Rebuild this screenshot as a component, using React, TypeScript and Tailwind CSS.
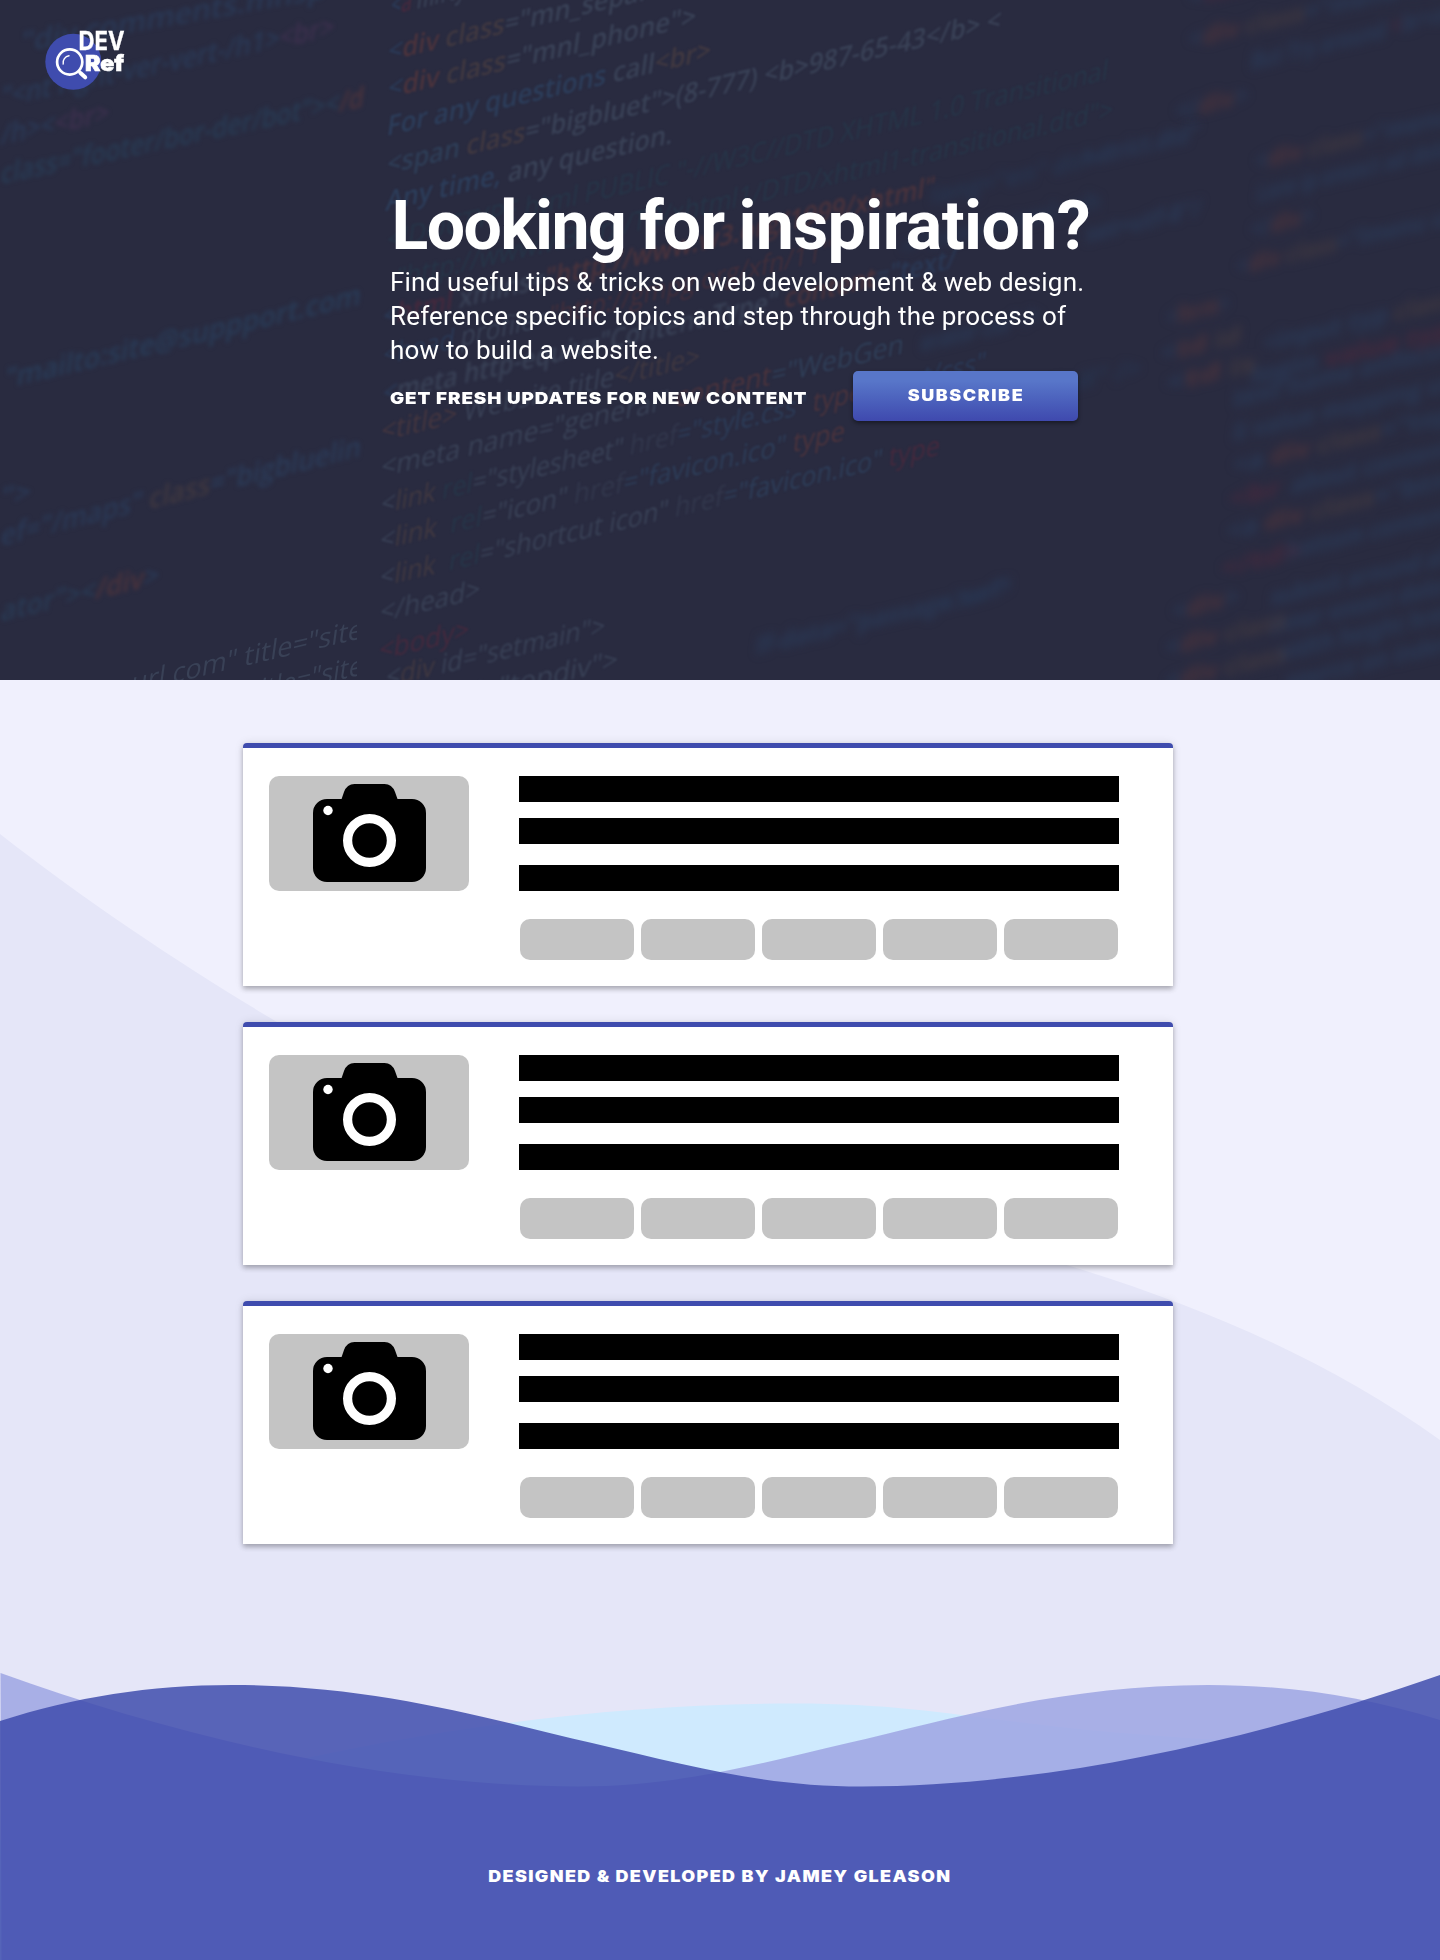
type Seg = [string, string?];
type Line = { x: number; y: number; w: number; a?: number; segs: Seg[] };

const GRAY = "#394156";
const BLUE = "#2a3956";
const BROWN = "#403840";
const ORANGE = "#4b333c";
const RED = "#45293d";
const TEAL = "#263548";
const PLUM = "#3d304e";

const soft: Line[] = [
  { x: 390, y: 15, w: 75, segs: [["<", BLUE], ["a", RED], [" mfrty", GRAY]] },
  { x: 387, y: 61, w: 262, segs: [["<", BLUE], ["div", ORANGE], [" class", BROWN], ['="mn_separ', GRAY]] },
  { x: 387, y: 98, w: 308, segs: [["<", BLUE], ["div", ORANGE], [" class", BROWN], ['="mnl_phone">', GRAY]] },
  { x: 386, y: 136, w: 324, segs: [["For any questions ", "#2c3d5a"], ["call", GRAY], ["<br>", BROWN]] },
  { x: 386, y: 174, w: 614, segs: [["<span", "#2e3d56"], [" class", BROWN], ['="bigbluet">(8-777) <b>987-65-43</b> <', GRAY]] },
  { x: 385, y: 211, w: 287, segs: [["Any time,", "#2c3d5a"], [" any question.", GRAY]] },
];

const crisp: Line[] = [
  { x: 386, y: 250, w: 721, segs: [['<!DOCTYPE html PUBLIC "-//W3C//DTD XHTML 1.0 Transitional', TEAL]] },
  { x: 395, y: 288, w: 717, segs: [['"http://www.w3.org/TR/xhtml1/DTD/xhtml1-transitional.dtd">', TEAL]] },
  { x: 382, y: 365, w: 448, segs: [["<head ", BLUE], ['profile=', GRAY], ['"http://gmpg.org/xfn/11"', "#432f3b"]] },
  { x: 380, y: 441, w: 319, segs: [["<title>", "#45363f"], [" Website title", GRAY], ["</title>", BROWN]] },
  { x: 379, y: 550, w: 465, segs: [["<", GRAY], ["link  ", BROWN], ["rel", TEAL], ['="icon" ', GRAY], ["href", "#32374c"], ['="favicon.ico" ', "#2d3d58"], ["type", ORANGE]] },
  { x: 379, y: 587, w: 560, segs: [["<", GRAY], ["link  ", BROWN], ["rel", TEAL], ['="shortcut icon" ', GRAY], ["href", "#32374c"], ['="favicon.ico" ', "#2d3d58"], ["type", RED]] },
  { x: 380, y: 477, w: 523, segs: [['<meta name="general" ', GRAY], ["content", ORANGE], ['="WebGen', "#2f3e57"]] },
  { x: 380, y: 514, w: 605, segs: [["<", GRAY], ["link ", BROWN], ["rel", TEAL], ['="stylesheet" ', GRAY], ["href", "#32374c"], ['="style.css" ', "#2c3c58"], ["type", ORANGE], ['="text/css"', BLUE]] },
  { x: 379, y: 622, w: 100, segs: [["</head>", GRAY]] },
  { x: 378, y: 660, w: 90, segs: [["<body>", RED]] },
  { x: 385, y: 687, w: 219, segs: [["<", GRAY], ["div", BROWN], [' id="setmain">', GRAY]] },
  { x: 396, y: 721, w: 221, segs: [["<", GRAY], ["div", BROWN], [' id="topdiv">', GRAY]] },
];

const hazy: Line[] = [
  { x: 382, y: 326, w: 552, segs: [["<", BLUE], ["html ", RED], ['xmlns=', GRAY], ['"http://www.w3.org/1999/xhtml"', ORANGE]] },
  { x: 382, y: 403, w: 573, segs: [["<", BLUE], ['meta http-equiv="Content-Type" ', GRAY], ["content", ORANGE], ['="text/', BLUE]] },
];

const left: Line[] = [
  { x: 20, y: 52, w: 305, a: -10, segs: [['"div comments.mnsp', BLUE]] },
  { x: 0, y: 107, w: 333, a: -12, segs: [['"<nt right-ver-vert-/h1>', BLUE], ["<br>", PLUM]] },
  { x: 0, y: 145, w: 108, a: -12, segs: [["/h><", BLUE], ["<br>", PLUM]] },
  { x: 0, y: 184, w: 363, a: -12, segs: [['class="footer/bor-der/bot"><', "#283b54"], ["/d", ORANGE]] },
  { x: 4, y: 389, w: 356, segs: [['"mailto:site@suppport.com', "#293c58"]] },
  { x: 0, y: 508, w: 30, segs: [['">', BLUE]] },
  { x: 0, y: 546, w: 360, a: -14, segs: [['ef="/maps" ', BLUE], ["class", BROWN], ['="bigbluelin', "#2b3b58"]] },
  { x: 0, y: 622, w: 158, segs: [['ator"><', "#293a54"], ["/div", ORANGE], [">", BLUE]] },
];

const leftCrisp: Line[] = [
  { x: 130, y: 693, w: 232, segs: [['url.com" title="site', GRAY]] },
  { x: 250, y: 701, w: 112, segs: [['title="site', GRAY]] },
];

const mid: Line[] = [
  { x: 1080, y: 168, w: 118, segs: [['1-strict.dtd"', BLUE]] },
  { x: 930, y: 205, w: 180, segs: [['lang="en" dir="', "#27344f"]] },
  { x: 900, y: 256, w: 200, segs: [['="text/html; ch', "#27344f"]] },
  { x: 1085, y: 243, w: 115, segs: [['set=utf-8"/', BLUE]] },
  { x: 920, y: 352, w: 120, segs: [['erator css" />', BLUE]] },
  { x: 1050, y: 397, w: 90, segs: [['"all" />', "#27344f"]] },
  { x: 755, y: 655, w: 255, segs: [['lf-data="passage.swf"', BLUE]] },
  { x: 940, y: 612, w: 70, segs: [['="en">', "#27344f"]] },
];

const right: Line[] = [
  { x: 1188, y: 6, w: 80, segs: [["<", BLUE], ["table", RED]] },
  { x: 1188, y: 48, w: 260, segs: [["<", BLUE], ["div", ORANGE], [" class", BROWN], ['="menu-top', BLUE]] },
  { x: 1250, y: 70, w: 135, segs: [["But Try around", BLUE]] },
  { x: 1390, y: 35, w: 60, segs: [["<", RED], ["br>or", BLUE]] },
  { x: 1175, y: 120, w: 72, segs: [["</", BLUE], ["div", ORANGE], [">", BLUE]] },
  { x: 1255, y: 170, w: 195, segs: [["<", BLUE], ["div", ORANGE], [" class", BROWN], ['="menu', BLUE]] },
  { x: 1256, y: 202, w: 200, segs: [["Lore ip onsect ad dolor", BLUE]] },
  { x: 1250, y: 238, w: 62, segs: [["</", BLUE], ["div", ORANGE], [">", BLUE]] },
  { x: 1236, y: 275, w: 215, segs: [["<", BLUE], ["div", ORANGE], [" class", BROWN], ['="lmenu ul', BLUE]] },
  { x: 1166, y: 326, w: 62, segs: [["<", BLUE], ["form", ORANGE], [">", BLUE]] },
  { x: 1160, y: 362, w: 80, segs: [["<", BLUE], ["td", ORANGE], [" id", BROWN]] },
  { x: 1165, y: 392, w: 90, segs: [["<", BLUE], ["td", ORANGE], [" is", BROWN]] },
  { x: 1262, y: 352, w: 190, segs: [["<input typ ", BLUE], ["class", BROWN]] },
  { x: 1250, y: 385, w: 200, segs: [["login ", BLUE], ["value typ", RED]] },
  { x: 1232, y: 408, w: 220, segs: [["text name onfocus", BLUE]] },
  { x: 1232, y: 442, w: 220, segs: [["li value mapping ur", BLUE]] },
  { x: 1232, y: 474, w: 220, segs: [["<a ", BLUE], ["div", ORANGE], [" class", BROWN], ['="top', BLUE]] },
  { x: 1290, y: 494, w: 160, segs: [["about content", BLUE]] },
  { x: 1228, y: 508, w: 60, segs: [["<br ", RED]] },
  { x: 1226, y: 540, w: 220, segs: [["<a ", BLUE], ["div", ORANGE], [" class", BROWN], ['="btn', BLUE]] },
  { x: 1285, y: 560, w: 165, segs: [["bottom content", BLUE]] },
  { x: 1220, y: 577, w: 80, segs: [["</td>", RED]] },
  { x: 1270, y: 606, w: 180, segs: [["submit around all", BLUE]] },
  { x: 1172, y: 620, w: 66, segs: [["<", BLUE], ["div", ORANGE], [">", BLUE]] },
  { x: 1270, y: 635, w: 180, segs: [["inner onsect dolor", BLUE]] },
  { x: 1165, y: 656, w: 120, segs: [["<", BLUE], ["div", ORANGE], [" class", BROWN]] },
  { x: 1275, y: 662, w: 175, segs: [["width height href", BLUE]] },
  { x: 1165, y: 690, w: 120, segs: [["<", BLUE], ["div", ORANGE], [" class", BROWN]] },
  { x: 1285, y: 690, w: 165, segs: [["source on index", BLUE]] },
];

function CodeLines({ lines, className, size }: { lines: Line[]; className?: string; size: number }) {
  return (
    <g className={className}>
      {lines.map((l, i) => (
        <text
          key={i}
          transform={`translate(${l.x} ${l.y}) skewY(${l.a ?? -13.3}) skewX(-8)`}
          fontSize={size}
          textLength={l.w}
          lengthAdjust="spacingAndGlyphs"
          xmlSpace="preserve"
        >
          {l.segs.map(([t, c], j) => (
            <tspan key={j} fill={c}>
              {t}
            </tspan>
          ))}
        </text>
      ))}
    </g>
  );
}

function CodeBackdrop() {
  return (
    <svg
      aria-hidden="true"
      viewBox="0 0 1440 680"
      className="absolute inset-0 h-full w-full font-['Open_Sans',sans-serif]"
    >
      <defs>
        <clipPath id="left-pane">
          <rect x="0" y="0" width="357" height="680" />
        </clipPath>
      </defs>
      <rect width="1440" height="680" fill="#292b40" />
      <CodeLines lines={left} size={28} className="font-semibold blur-[2px]" />
      <g clipPath="url(#left-pane)">
        <CodeLines lines={leftCrisp} size={27} className="font-medium blur-[0.7px]" />
      </g>
      <CodeLines lines={soft} size={27} className="font-semibold blur-[1.1px]" />
      <CodeLines lines={crisp} size={27} className="font-medium blur-[0.8px]" />
      <CodeLines lines={hazy} size={27} className="font-semibold blur-[1.4px]" />
      <CodeLines lines={mid} size={24} className="font-bold blur-[4px]" />
      <CodeLines lines={right} size={24} className="font-bold blur-[5px]" />
    </svg>
  );
}

function Logo() {
  return (
    <svg viewBox="0 0 90 64" className="h-16 w-[90px] font-[Inter,sans-serif]" role="img" aria-label="DEV Ref">
      <circle cx="33.3" cy="33.8" r="28" fill="#3f4cae" />
      <path d="M39.5 43.5 L47.5 51" stroke="#3f4cae" strokeWidth="6" />
      <text x="38.5" y="22" fontSize="26" fontWeight="700" fill="#fff" stroke="#fff" strokeWidth="0.3" textLength="46" lengthAdjust="spacingAndGlyphs">
        DEV
      </text>
      <text x="45" y="43" fontSize="22" fontWeight="900" fill="#fff" stroke="#fff" strokeWidth="0.6" textLength="39" lengthAdjust="spacingAndGlyphs">
        Ref
      </text>
      <circle cx="29.7" cy="34" r="12.6" fill="none" stroke="#fff" strokeWidth="2.7" />
      <path d="M38.5 43 L41 45.4" stroke="#fff" strokeWidth="2.6" />
      <path d="M40.5 45 L45.2 49.3" stroke="#fff" strokeWidth="4" strokeLinecap="round" />
      <path d="M23.2 36 A7 7 0 0 1 29 27.8" fill="none" stroke="#fff" strokeWidth="1.4" strokeLinecap="round" />
    </svg>
  );
}

function Hero() {
  return (
    <header className="relative h-[680px] overflow-hidden text-white">
      <CodeBackdrop />
      <div className="relative pt-7 pl-10">
        <Logo />
      </div>
      <div className="relative mt-[94px] ml-[390px] w-[720px]">
        <h1 className="ml-[1.5px] font-[Roboto,sans-serif] text-[68px] leading-[80px] font-bold tracking-[-0.6px] whitespace-nowrap [word-spacing:-2px]">
          <span className="tracking-[-1.6px]">Looking</span> <span className="tracking-[-1px]">for</span> inspiration?
        </h1>
        <p className="-mt-[1px] font-[Roboto,sans-serif] text-[26px] leading-[34px] tracking-[0.19px]">
          Find useful tips &amp; tricks on web development &amp; web design.
          <br />
          Reference specific topics and step through the process of
          <br />
          how to build a website.
        </p>
        <div className="mt-1 flex h-[50px] w-[688px] items-center justify-between font-[Inter,sans-serif] font-black">
          <p className="mt-1 origin-left scale-x-[1.14] text-[16.5px] tracking-[0.8px] whitespace-nowrap">
            GET FRESH UPDATES FOR NEW CONTENT
          </p>
          <button className="flex h-[50px] w-[225px] items-center justify-center rounded-[5px] bg-linear-to-b from-[#5876c9] from-20% to-[#3f49ae] shadow-[0_2px_4px_rgba(0,0,0,0.45)]">
            <span className="scale-x-[1.12] pb-0.5 text-base tracking-[1.4px]">SUBSCRIBE</span>
          </button>
        </div>
      </div>
    </header>
  );
}

function Camera() {
  return (
    <svg viewBox="0 0 113 98" className="h-[98px] w-[113px]" aria-hidden="true">
      <path d="M14 15 H28.6 L31 8 Q34 0 41.5 0 H71.5 Q79 0 82 8 L84.5 15 H99 A14 14 0 0 1 113 29 V84 A14 14 0 0 1 99 98 H14 A14 14 0 0 1 0 84 V29 A14 14 0 0 1 14 15 Z" />
      <circle cx="15" cy="26.5" r="4.7" fill="#fff" />
      <circle cx="56.5" cy="56.5" r="21.9" fill="none" stroke="#fff" strokeWidth="9.2" />
    </svg>
  );
}

function Card() {
  return (
    <article className="flex h-[243px] w-[930px] rounded-t border-t-[5px] border-[#3f4cae] bg-white pt-7 pl-[26px] shadow-[0_3px_5px_rgba(0,0,0,0.26),0_0_10px_rgba(0,0,0,0.1)]">
      <div className="flex h-[115px] w-[200px] justify-center rounded-[10px] bg-[#c4c4c4] pt-2">
        <Camera />
      </div>
      <div className="ml-[50px] w-[600px]">
        <div className="h-[26px] bg-black" />
        <div className="mt-4 h-[26px] bg-black" />
        <div className="mt-[21px] h-[26px] bg-black" />
        <div className="mt-7 flex gap-[7px] pl-px">
          {[0, 1, 2, 3, 4].map((i) => (
            <div key={i} className="h-[41px] w-[114px] rounded-[10px] bg-[#c4c4c4]" />
          ))}
        </div>
      </div>
    </article>
  );
}

export default function App() {
  return (
    <div className="relative h-[1960px] w-[1440px] overflow-hidden bg-[#f0f0fd]">
      <Hero />
      <svg viewBox="0 0 1440 1280" className="absolute top-[680px] left-0 h-[1280px] w-[1440px]" aria-hidden="true">
        <g transform="translate(0 -680)">
          <path
            d="M0 834 C95 908 190 970 277 1022 C560 1185 850 1200 1070 1266 C1210 1309 1330 1362 1440 1440 V1960 H0 Z"
            fill="#e5e6f8"
          />
          <path
            d="M0 1840 C250 1760 520 1703.5 795 1703.5 C900 1703.5 960 1716 1060 1727 C1180 1740 1300 1745 1440 1746 V1960 H0 Z"
            fill="#cfeafe"
          />
          <path
            d="M0.5 1673 C180 1738 390 1786.5 578 1786.5 C675 1786.5 750 1766 848 1743 C940 1722 1060 1685 1208 1685 C1290 1685 1365 1697 1440 1720 V1960 H1.5 Z"
            fill="#9ea5e3"
            fillOpacity="0.85"
          />
          <path
            d="M0 1721 C75 1697 150 1685 232 1685 C380 1685 500 1722 592 1743 C690 1766 765 1786.5 862 1786.5 C1050 1786.5 1260 1738 1440 1675 V1960 H0 Z"
            fill="#404cad"
            fillOpacity="0.85"
          />
        </g>
      </svg>
      <main className="relative mt-[63px] ml-[243px] flex flex-col gap-9">
        <Card />
        <Card />
        <Card />
      </main>
      <footer className="relative mt-[322px] flex justify-center">
        <p className="scale-x-[1.12] font-[Inter,sans-serif] text-base leading-5 font-black tracking-[1.25px] text-white">
          DESIGNED &amp; DEVELOPED BY JAMEY GLEASON
        </p>
      </footer>
    </div>
  );
}
